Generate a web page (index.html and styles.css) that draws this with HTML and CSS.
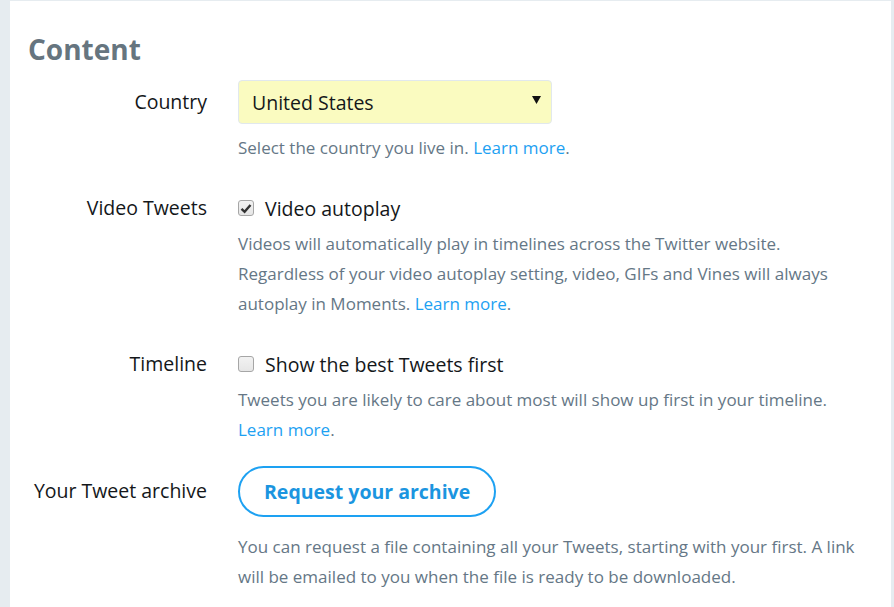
FILE: index.html
```html
<!DOCTYPE html>
<html>
<head>
<meta charset="utf-8">
<link rel="stylesheet" href="styles.css">
</head>
<body>
<div class="panel">
  <h2 class="heading">Content</h2>

  <div class="row row-country">
    <div class="label label-select">Country</div>
    <div class="control">
      <div class="select">
        <span class="select-value">United States</span>
        <svg class="select-arrow" width="9" height="8" viewBox="0 0 9 8"><path d="M0 0H9L4.5 8Z" fill="#111"/></svg>
      </div>
      <p class="help help-select">Select the country you live in. <a class="link">Learn more</a>.</p>
    </div>
  </div>

  <div class="row row-video">
    <div class="label label-check">Video Tweets</div>
    <div class="control">
      <div class="check-line">
        <span class="checkbox checked">
          <svg width="12" height="11" viewBox="0 0 12 11"><path d="M1.5 5.8L4.6 8.8L10.5 2" fill="none" stroke="#333" stroke-width="2.4"/></svg>
        </span>
        <span class="check-text">Video autoplay</span>
      </div>
      <p class="help">Videos will automatically play in timelines across the Twitter website.<br>Regardless of your video autoplay setting, video, GIFs and Vines will always<br>autoplay in Moments. <a class="link">Learn more</a>.</p>
    </div>
  </div>

  <div class="row row-timeline">
    <div class="label label-check">Timeline</div>
    <div class="control">
      <div class="check-line">
        <span class="checkbox"></span>
        <span class="check-text">Show the best Tweets first</span>
      </div>
      <p class="help">Tweets you are likely to care about most will show up first in your timeline.<br><a class="link">Learn more</a>.</p>
    </div>
  </div>

  <div class="row row-archive">
    <div class="label label-button">Your Tweet archive</div>
    <div class="control">
      <button class="btn">Request your archive</button>
      <p class="help help-button">You can request a file containing all your Tweets, starting with your first. A link<br>will be emailed to you when the file is ready to be downloaded.</p>
    </div>
  </div>
</div>
</body>
</html>
```

FILE: styles.css
```css
html, body {
  margin: 0;
  padding: 0;
}
body {
  background: #e6ecf0;
  font-family: "Open Sans", "Noto Sans", sans-serif;
  color: #14171a;
  height: 607px;
  overflow: hidden;
}
.panel {
  margin: 1px 0 0 10px;
  width: 881px;
  height: 620px;
  background: #fff;
  padding: 31px 0 0 0;
  box-sizing: border-box;
}
.heading {
  margin: 0 0 14px 18px;
  font-size: 28px;
  line-height: 34px;
  font-weight: 700;
  color: #66757f;
}
.row {
  display: grid;
  grid-template-columns: 197px 1fr;
  column-gap: 31px;
}
.label {
  text-align: right;
  font-size: 19.5px;
  color: #14171a;
}
.label-select { line-height: 44px; }
.label-check { line-height: 30px; }
.label-button { line-height: 50px; }
.control { min-width: 0; }

.select {
  width: 314px;
  height: 44px;
  box-sizing: border-box;
  border: 1px solid #e1e8ed;
  border-radius: 4px;
  background: #fafbc0;
  display: flex;
  align-items: center;
  justify-content: space-between;
  padding: 0 10px 0 13px;
  font-size: 19.5px;
  color: #14171a;
}
.select-arrow { margin-top: -4px; }

.help {
  margin: 0;
  font-size: 17px;
  line-height: 30px;
  color: #657786;
  white-space: nowrap;
}
.help-select { margin-top: 9px; margin-bottom: 30px; }
.link { color: #1da1f2; text-decoration: none; }

.check-line {
  display: flex;
  align-items: center;
  height: 30px;
}
.checkbox {
  width: 14px;
  height: 14px;
  border: 1px solid #a6a6a6;
  border-radius: 3px;
  background: linear-gradient(#f2f2f2, #e6e6e6);
  display: inline-flex;
  align-items: center;
  justify-content: center;
  margin: 0 11px 0 0;
}
.check-text {
  font-size: 19.5px;
  color: #14171a;
}
.row-video { margin-bottom: 30px; }
.row-timeline { margin-bottom: 21px; }
.row-video .help, .row-timeline .help { margin-top: 6px; }

.btn {
  height: 51px;
  box-sizing: border-box;
  padding: 0 24px;
  border: 2px solid #1da1f2;
  border-radius: 26px;
  background: #fff;
  color: #1b95e0;
  font-family: inherit;
  font-size: 19.5px;
  font-weight: 700;
  display: block;
}
.help-button { margin-top: 15px; }
```
